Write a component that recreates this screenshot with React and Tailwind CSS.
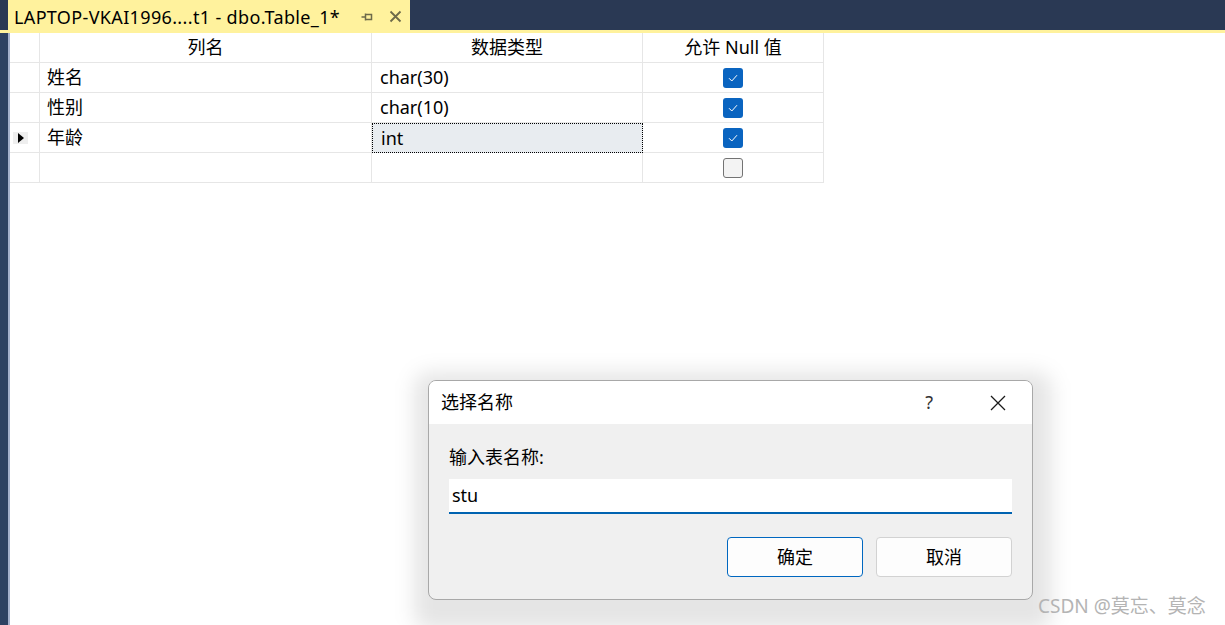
import React from 'react';

const FONT = 'font-["Noto_Sans","Noto_Sans_CJK_SC",sans-serif]';

const rows = [
  { name: '姓名', type: 'char(30)', allow: true },
  { name: '性别', type: 'char(10)', allow: true },
  { name: '年龄', type: 'int', allow: true, current: true },
  { name: '', type: '', allow: false, blank: true },
];

const CheckBox = ({ on }) =>
  on ? (
    <span className="flex h-[20px] w-[20px] items-center justify-center rounded-[3px] bg-[#0a64c0]">
      <svg width="12" height="10" viewBox="0 0 12 10" fill="none">
        <path d="M2 5.2 L4.8 8 L10 2.2" stroke="#fff" strokeWidth="1" />
      </svg>
    </span>
  ) : (
    <span className="block h-[20px] w-[20px] rounded-[3px] border border-[#737373] bg-[#f3f3f3]" />
  );

export default function App() {
  return (
    <div className={`relative h-[625px] w-[1225px] overflow-hidden bg-white text-black ${FONT}`}>
      {/* tab strip */}
      <div className="flex h-[30px] bg-[#2a3954]">
        <div className="ml-[8px] flex h-[33px] w-[402px] items-center bg-[#fff29d] pl-[6px]">
          <span className="w-[331px] shrink-0 text-[18px] leading-none tracking-[0.35px]">LAPTOP-VKAI1996....t1 - dbo.Table_1*</span>
          <svg className="ml-[15px]" width="14" height="14" viewBox="0 0 14 14" fill="none">
            <path d="M1.5 7 H5.5 M5.5 3.5 V10.5 M5.5 4.5 H11.5 V9.5 H5.5" stroke="#6d6a4a" strokeWidth="1.5" />
          </svg>
          <svg className="ml-[15px]" width="13" height="13" viewBox="0 0 13 13" fill="none">
            <path d="M1.5 1.5 L11.5 11.5 M11.5 1.5 L1.5 11.5" stroke="#6d6a4a" strokeWidth="1.8" />
          </svg>
        </div>
      </div>
      <div className="h-[3px] bg-[#fff29d]" />

      <div className="flex h-[592px]">
        <div className="w-[8px] bg-[#2d4162]" />
        <div className="w-[2px] bg-[#a4b0cc]" />

        {/* designer grid */}
        <div className="w-[815px]">
          <div className="grid grid-cols-[30px_332px_271px_181px] text-[18px]">
            <div className="h-[30px] border-r border-b border-[#e6e6e6]" />
            <div className="flex h-[30px] items-center justify-center border-r border-b border-[#e6e6e6]">列名</div>
            <div className="flex h-[30px] items-center justify-center border-r border-b border-[#e6e6e6]">数据类型</div>
            <div className="flex h-[30px] items-center justify-center border-r border-b border-[#e6e6e6]">允许 Null 值</div>
            {rows.map((r, i) => (
              <React.Fragment key={i}>
                <div className="flex h-[30px] items-center border-r border-b border-[#e6e6e6] pl-[3px]">
                  {r.current ? (
                    <span className="flex h-[12px] w-[15px] items-center justify-center bg-[#eeeeee]">
                      <span className="h-0 w-0 border-y-[5px] border-l-[6px] border-y-transparent border-l-black" />
                    </span>
                  ) : null}
                </div>
                <div className="flex h-[30px] items-center border-r border-b border-[#e6e6e6] pl-[7px]">{r.name}</div>
                <div
                  className={
                    r.current
                      ? 'flex h-[30px] items-center border border-dotted border-black bg-[#e8ecf0] pl-[8px]'
                      : 'flex h-[30px] items-center border-r border-b border-[#e6e6e6] pl-[8px]'
                  }
                >
                  {r.type}
                </div>
                <div className="flex h-[30px] items-center justify-center border-r border-b border-[#e6e6e6]">
                  <CheckBox on={r.allow} />
                </div>
              </React.Fragment>
            ))}
          </div>
        </div>
      </div>

      {/* shadow under dialog */}
      <div className="absolute left-[414px] top-[372px] h-[258px] w-[638px] rounded-[16px] bg-black/10 blur-[10px]" />

      {/* dialog */}
      <div className="absolute left-[428px] top-[380px] flex h-[220px] w-[605px] flex-col overflow-hidden rounded-[8px] border border-[#a8a8a8] bg-[#f0f0f0]">
        <div className="flex h-[43px] items-center bg-white pl-[12px]">
          <span className="text-[18px]">选择名称</span>
          <span className="ml-auto mr-[57px] text-[18px] text-[#333]">?</span>
          <svg className="mr-[26px]" width="16" height="16" viewBox="0 0 16 16" fill="none">
            <path d="M1 1 L15 15 M15 1 L1 15" stroke="#1a1a1a" strokeWidth="1.3" />
          </svg>
        </div>
        <div className="flex flex-col px-[20px] pt-[21px]">
          <span className="text-[18px] leading-[24px]">输入表名称:</span>
          <div className="mt-[10px] flex h-[35px] items-center border-b-2 border-[#0063b1] bg-white pl-[3px] text-[18px]">stu</div>
          <div className="mt-[23px] flex justify-end gap-[13px]">
            <button className="h-[40px] w-[136px] rounded-[4px] border border-[#0067c0] bg-[#fdfdfd] text-[18px]">确定</button>
            <button className="h-[40px] w-[136px] rounded-[4px] border border-[#d2d2d2] bg-[#fdfdfd] text-[18px]">取消</button>
          </div>
        </div>
      </div>

      <span className="absolute left-[1038px] top-[592px] text-[19px] text-[#b4b4b4]">CSDN @莫忘、莫念</span>
    </div>
  );
}
